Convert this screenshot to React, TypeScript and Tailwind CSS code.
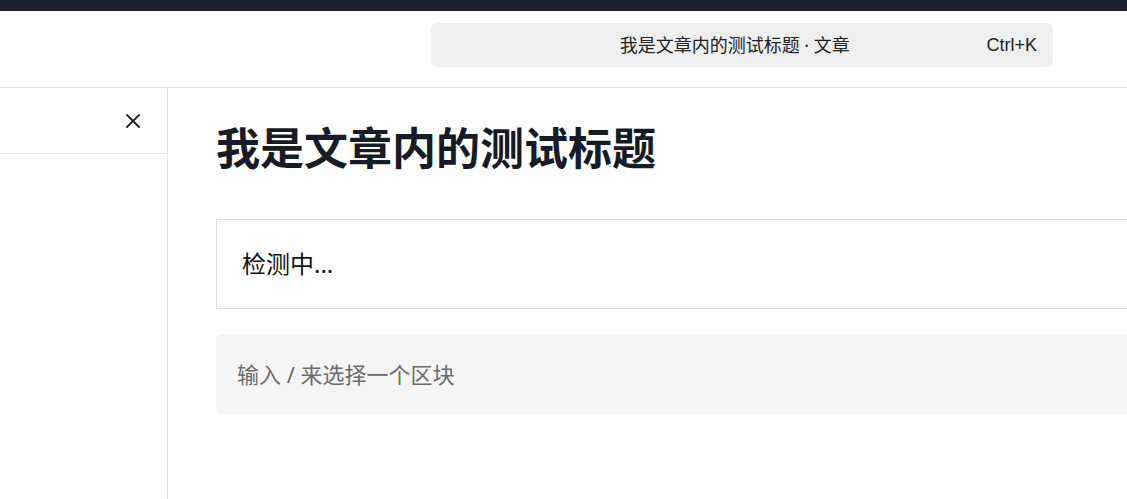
const CJK = "font-['Noto_Sans','Noto_Sans_CJK_SC',sans-serif]";

function CloseIcon() {
  return (
    <svg width="14" height="14" viewBox="0 0 14 14" fill="none" stroke="#1f1f1f" strokeWidth="1.8" strokeLinecap="round">
      <path d="M1 1L13 13" />
      <path d="M13 1L1 13" />
    </svg>
  );
}

export default function App() {
  return (
    <div className={`h-[499px] w-[1127px] overflow-hidden bg-white flex flex-col ${CJK}`}>
      {/* top strip */}
      <div className="h-[11px] bg-[#1b212b] shrink-0" />

      {/* header */}
      <header className="h-[77px] shrink-0 border-b border-[#e3e3e3] flex items-start pt-[12px]">
        <div className="ml-[431px] w-[622px] h-[44px] rounded-md bg-[#efefef] flex items-center pl-4 pr-4">
          <span className="flex-1 text-center text-[18px] text-[#222] pl-[36px]">我是文章内的测试标题 · 文章</span>
          <span className="text-[18px] text-[#222] font-['Liberation_Sans',sans-serif]">Ctrl+K</span>
        </div>
      </header>

      <div className="flex flex-1 min-h-0">
        {/* sidebar */}
        <aside className="w-[168px] shrink-0 border-r border-[#e3e3e3]">
          <div className="h-[66px] border-b border-[#e3e3e3] flex items-center justify-end pr-[27px]">
            <CloseIcon />
          </div>
        </aside>

        {/* main */}
        <main className="pl-[48px] pt-[34px] w-[1100px] shrink-0">
          <h1 className="text-[44px] leading-[53px] font-bold text-[#161b26]">我是文章内的测试标题</h1>
          <div className="mt-[44px] h-[90px] border border-[#dedede] flex items-center pl-[25px]">
            <span className="text-[24px] text-[#111]">检测中...</span>
          </div>
          <div className="mt-[25px] h-[80px] rounded-md bg-[#f5f5f5] flex items-center pl-[21px]">
            <span className="text-[22px] text-[#6b6b6b]">输入 / 来选择一个区块</span>
          </div>
        </main>
      </div>
    </div>
  );
}
